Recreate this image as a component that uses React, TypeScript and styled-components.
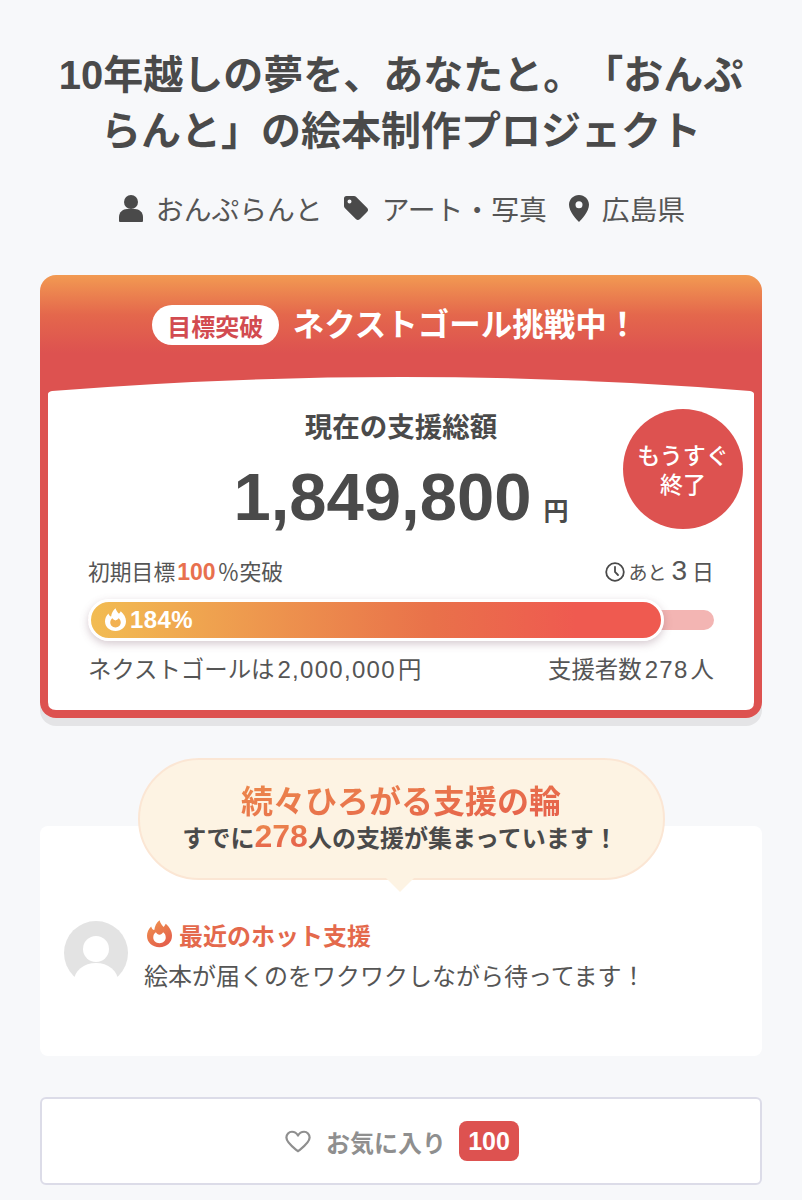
import React from "react";
import styled, { createGlobalStyle, css } from "styled-components";

const GlobalStyle = createGlobalStyle`
  html, body {
    margin: 0;
    padding: 0;
    background: #f7f8fa;
  }
  * {
    box-sizing: border-box;
  }
  body {
    font-family: "Liberation Sans", "Noto Sans CJK JP", sans-serif;
    color: #4a4a4a;
    text-spacing-trim: space-all;
  }
`;

const textGradient = css`
  background: linear-gradient(170deg, #ec8a4c 10%, #e55c4c 90%);
  -webkit-background-clip: text;
  background-clip: text;
  color: transparent;
`;

const Page = styled.div`
  width: 802px;
  height: 1200px;
  overflow: hidden;
  padding: 47px 40px 0;
`;

const Title = styled.h1`
  margin: 0;
  font-size: 40px;
  line-height: 56px;
  font-weight: 700;
  text-align: center;
  color: #4a4a4a;
  padding: 0 12px;
`;

const Meta = styled.div`
  display: flex;
  justify-content: center;
  align-items: center;
  height: 40px;
  margin-top: 29px;
  margin-bottom: 47px;
  padding-left: 2px;
`;

const MetaItem = styled.div`
  display: flex;
  align-items: center;
  gap: 13px;
  font-size: 27.8px;
  color: #555;
  margin-right: 20px;

  &:nth-child(2) {
    margin-right: 22px;
  }

  &:last-child {
    margin-right: 0;
  }
`;

const Card = styled.section`
  position: relative;
  height: 443px;
  border-radius: 16px;
  background: linear-gradient(180deg, #f29a52 0, #e4674c 40px, #dd5250 78px);
  box-shadow: 0 8px 0 #e4e4e6;
  padding: 0 8px 8px;
  display: flex;
  flex-direction: column;
`;

const CardHead = styled.div`
  height: 102px;
  padding: 30px 12px 0 0;
  display: flex;
  justify-content: center;
  align-items: flex-start;
  gap: 14px;
`;

const GoalPill = styled.span`
  display: flex;
  align-items: center;
  justify-content: center;
  width: 127px;
  height: 40px;
  border-radius: 20px;
  background: #fff;
  color: #d24b50;
  font-size: 24px;
  font-weight: 700;
`;

const HeadText = styled.span`
  color: #fff;
  font-size: 31.5px;
  line-height: 40px;
  font-weight: 700;
`;

const CardBody = styled.div`
  position: relative;
  flex: 1;
  background: #fff;
  clip-path: path("M0 17 Q0 15 4 14 Q353 -14 702 14 Q706 15 706 17 V325 Q706 333 698 333 H8 Q0 333 0 325 Z");
  padding: 33px 40px 0;
  display: flex;
  flex-direction: column;
`;

const TotalLabel = styled.div`
  font-size: 27.5px;
  line-height: 36px;
  font-weight: 700;
  text-align: center;
  color: #4a4a4a;
`;

const Amount = styled.div`
  display: flex;
  justify-content: center;
  align-items: baseline;
  gap: 12px;
  margin-top: 11px;
  height: 80px;
  line-height: 80px;
`;

const AmountNumber = styled.span`
  font-size: 67px;
  font-weight: 700;
  color: #4a4a4a;
`;

const AmountUnit = styled.span`
  font-size: 25px;
  font-weight: 700;
  color: #4a4a4a;
`;

const EndingBadge = styled.div`
  position: absolute;
  top: 32px;
  right: 11px;
  width: 120px;
  height: 120px;
  padding-top: 4px;
  border-radius: 50%;
  background: #dd5250;
  color: #fff;
  font-size: 23px;
  line-height: 29px;
  font-weight: 500;
  text-align: center;
  display: flex;
  align-items: center;
  justify-content: center;
`;

const StatusRow = styled.div`
  display: flex;
  justify-content: space-between;
  align-items: center;
  height: 32px;
  margin-top: 17px;
  font-size: 21.8px;
  color: #555;
`;

const Percent = styled.strong`
  color: #e8704e;
  font-size: 23px;
  font-weight: 700;
  margin: 0 2px 0 2px;
`;

const Remaining = styled.div`
  display: flex;
  align-items: baseline;
  font-size: 19px;
`;

const ClockIcon = styled.svg`
  width: 20px;
  height: 20px;
  margin-right: 3px;
  align-self: center;
  position: relative;
  top: 2px;
`;

const RemainingNumber = styled.span`
  font-size: 28px;
  margin: 0 5px 0 5px;
`;

const RemainingUnit = styled.span`
  font-size: 22px;
`;

const Progress = styled.div`
  display: flex;
  align-items: center;
  height: 42px;
  margin-top: 13px;
`;

const Track = styled.div`
  position: relative;
  width: 100%;
  height: 20px;
  border-radius: 10px;
  background: #f3b5b3;
`;

const Fill = styled.div`
  position: absolute;
  left: 0;
  top: -11px;
  height: 42px;
  border-radius: 21px;
  border: 3px solid #fff;
  background: linear-gradient(90deg, #f2bc52 0%, #e9714a 60%, #ef5a50 85%);
  box-shadow: 0 3px 8px rgba(120, 80, 100, 0.3);
  display: flex;
  align-items: center;
  padding-left: 14px;
  gap: 4px;
  color: #fff;
  font-size: 24px;
  letter-spacing: 0.4px;
  font-weight: 700;
`;

const FooterRow = styled.div`
  display: flex;
  justify-content: space-between;
  align-items: center;
  height: 36px;
  margin-top: 9px;
  font-size: 23.4px;
  color: #555;
`;

const FooterNumber = styled.span`
  font-size: 24px;
  letter-spacing: 1.3px;
  margin: 0 2px 0 3px;
`;

const SupportSection = styled.section`
  margin-top: 40px;
`;

const Bubble = styled.div`
  position: relative;
  z-index: 1;
  width: 527px;
  height: 122px;
  margin: 0 auto;
  padding-top: 22px;
  border-radius: 61px;
  border: 2px solid #fbe6d4;
  background: #fdf3e3;
  text-align: center;

  &::after {
    content: "";
    position: absolute;
    left: 50%;
    bottom: -14px;
    width: 28px;
    height: 14px;
    margin-left: -15px;
    background: #fdf3e3;
    clip-path: polygon(0 0, 100% 0, 50% 100%);
  }
`;

const BubbleTitle = styled.div`
  font-size: 32px;
  line-height: 40px;
  font-weight: 700;
  ${textGradient}
`;

const BubbleText = styled.div`
  font-size: 24px;
  line-height: 29px;
  font-weight: 700;
  color: #4a4a4a;
  padding-right: 2px;
`;

const BubbleCount = styled.span`
  font-size: 32px;
  ${textGradient}
`;

const SupportCard = styled.div`
  height: 230px;
  margin-top: -54px;
  padding: 95px 24px 0;
  border-radius: 8px;
  background: #fff;
  display: flex;
  align-items: flex-start;
  gap: 16px;
`;

const Avatar = styled.svg`
  width: 64px;
  height: 64px;
  flex: none;
`;

const SupportBody = styled.div`
  display: flex;
  flex-direction: column;
  margin-top: -3px;
`;

const HotLabel = styled.div`
  display: flex;
  align-items: center;
  gap: 7px;
  margin-left: 3px;
  height: 32px;
  font-size: 24px;
  font-weight: 700;
  color: #e4694c;
`;

const Comment = styled.div`
  margin-top: 11px;
  font-size: 24px;
  line-height: 32px;
  color: #555;
`;

const FavoriteButton = styled.button`
  display: flex;
  align-items: center;
  justify-content: center;
  width: 100%;
  height: 88px;
  margin-top: 41px;
  padding: 0 0 0 2px;
  border: 2px solid #dcdce8;
  border-radius: 6px;
  background: #fff;
  font-family: inherit;
  font-size: 24px;
  font-weight: 700;
  color: #8f8f8f;
  gap: 15px;
`;

const FavoriteCount = styled.span`
  display: flex;
  align-items: center;
  justify-content: center;
  width: 60px;
  height: 40px;
  margin-left: -2px;
  border-radius: 8px;
  background: #dd5250;
  color: #fff;
  font-size: 25px;
`;

const PersonIcon = () => (
  <svg width="24" height="28" viewBox="0 0 24 28">
    <circle cx="12" cy="8" r="7" fill="#4a4a4a" />
    <path d="M0 27v-4c0-5 4-8 8-8h8c4 0 8 3 8 8v4a1 1 0 0 1-1 1H1a1 1 0 0 1-1-1z" fill="#4a4a4a" />
  </svg>
);

const TagIcon = () => (
  <svg width="26" height="26" viewBox="0 0 26 26">
    <path
      fillRule="evenodd"
      d="M1 3.500A2.500 2.500 0 0 1 3.500 1h7.500c.8 0 1.500.3 2 .8l11 11a3 3 0 0 1 0 4.200l-7 7a3 3 0 0 1-4.200 0l-11-11c-.5-.5-.8-1.200-.8-2zM6.500 4.500a2 2 0 1 0 0 4 2 2 0 0 0 0-4z"
      fill="#4a4a4a"
    />
  </svg>
);

const PinIcon = () => (
  <svg width="20" height="27" viewBox="0 0 20 27">
    <path
      fillRule="evenodd"
      d="M10 0C4.500 0 0 4.300 0 9.800 0 16.500 7.500 24.500 10 27c2.500-2.500 10-10.500 10-17.200C20 4.300 15.500 0 10 0zm0 6.300a3.500 3.500 0 1 1 0 7 3.500 3.500 0 0 1 0-7z"
      fill="#4a4a4a"
    />
  </svg>
);

const FlameIcon = ({ size, id, outer, inner }: { size: number; id?: string; outer?: string; inner: string }) => (
  <svg width={size} height={size * 1.1} viewBox="0 0 24 26">
    {id && (
      <defs>
        <linearGradient id={id} x1="0" y1="0" x2="0.6" y2="1">
          <stop offset="0" stopColor="#f0964e" />
          <stop offset="1" stopColor="#e4604c" />
        </linearGradient>
      </defs>
    )}
    <path
      d="M12 26C5 26 0 21.500 0 15 0 11.500 1.500 8.500 4 6c.5 2 1.500 3 3 3.500C7.500 5.500 9 2.500 12 0c1 3 2.500 5 4 6.500 1-1 1.500-2 2-3 3.500 3 6 7 6 11.500 0 6.500-5 11-12 11z"
      fill={id ? `url(#${id})` : outer}
    />
    <path
      d="M12 22c-3.500 0-6-2.500-6-5.500 0-2.500 1-4 2.500-5 1 1.500 2 2 3.500 2.500 1.500-.5 2.500-1 3.500-2.500 1.500 1 2.500 2.500 2.500 5 0 3-2.500 5.500-6 5.500z"
      fill={inner}
    />
  </svg>
);

function App() {
  const progress = 92;

  return (
    <Page>
      <GlobalStyle />
      <Title>10年越しの夢を、あなたと。「おんぷらんと」の絵本制作プロジェクト</Title>
      <Meta>
        <MetaItem>
          <PersonIcon />
          おんぷらんと
        </MetaItem>
        <MetaItem>
          <TagIcon />
          アート・写真
        </MetaItem>
        <MetaItem>
          <PinIcon />
          広島県
        </MetaItem>
      </Meta>

      <Card>
        <CardHead>
          <GoalPill>目標突破</GoalPill>
          <HeadText>ネクストゴール挑戦中！</HeadText>
        </CardHead>
        <CardBody>
          <TotalLabel>現在の支援総額</TotalLabel>
          <Amount>
            <AmountNumber>1,849,800</AmountNumber>
            <AmountUnit>円</AmountUnit>
          </Amount>
          <EndingBadge>
            もうすぐ
            <br />
            終了
          </EndingBadge>
          <StatusRow>
            <span>
              初期目標<Percent>100</Percent>％突破
            </span>
            <Remaining>
              <ClockIcon viewBox="0 0 20 20" fill="none" stroke="#4a4a4a" strokeWidth="1.800" strokeLinecap="round">
                <circle cx="10" cy="10" r="8.800" />
                <path d="M10 4.800V10l3 3" />
              </ClockIcon>
              あと<RemainingNumber>3</RemainingNumber>
              <RemainingUnit>日</RemainingUnit>
            </Remaining>
          </StatusRow>
          <Progress>
            <Track>
              <Fill style={{ width: `${progress}%` }}>
                <FlameIcon size={21} outer="#fff" inner="#f2b152" />
                184%
              </Fill>
            </Track>
          </Progress>
          <FooterRow>
            <span>
              ネクストゴールは<FooterNumber>2,000,000</FooterNumber>円
            </span>
            <span>
              支援者数<FooterNumber>278</FooterNumber>人
            </span>
          </FooterRow>
        </CardBody>
      </Card>

      <SupportSection>
        <Bubble>
          <BubbleTitle>続々ひろがる支援の輪</BubbleTitle>
          <BubbleText>
            すでに<BubbleCount>278</BubbleCount>人の支援が集まっています！
          </BubbleText>
        </Bubble>
        <SupportCard>
          <Avatar viewBox="0 0 64 64">
            <circle cx="32" cy="32" r="32" fill="#e3e3e3" />
            <circle cx="32" cy="28" r="13" fill="#fff" />
            <ellipse cx="32" cy="60" rx="22" ry="18" fill="#fff" />
            <path d="M12 58h40v6H12z" fill="#fff" />
          </Avatar>
          <SupportBody>
            <HotLabel>
              <FlameIcon size={25} id="hotFlame" inner="#fff" />
              最近のホット支援
            </HotLabel>
            <Comment>絵本が届くのをワクワクしながら待ってます！</Comment>
          </SupportBody>
        </SupportCard>
      </SupportSection>

      <FavoriteButton type="button">
        <svg width="26" height="23" viewBox="0 0 28 24" fill="none" stroke="#8f8f8f" strokeWidth="2.400" strokeLinejoin="round">
          <path d="M14 22.500C9 18.500 1.500 13.500 1.500 7.800 1.500 4.300 4.200 1.500 7.500 1.500c2.700 0 5 1.500 6.500 4 1.500-2.500 3.800-4 6.500-4 3.300 0 6 2.800 6 6.300 0 5.700-7.500 10.700-12.500 14.700z" />
        </svg>
        お気に入り
        <FavoriteCount>100</FavoriteCount>
      </FavoriteButton>
    </Page>
  );
}

export default App;
